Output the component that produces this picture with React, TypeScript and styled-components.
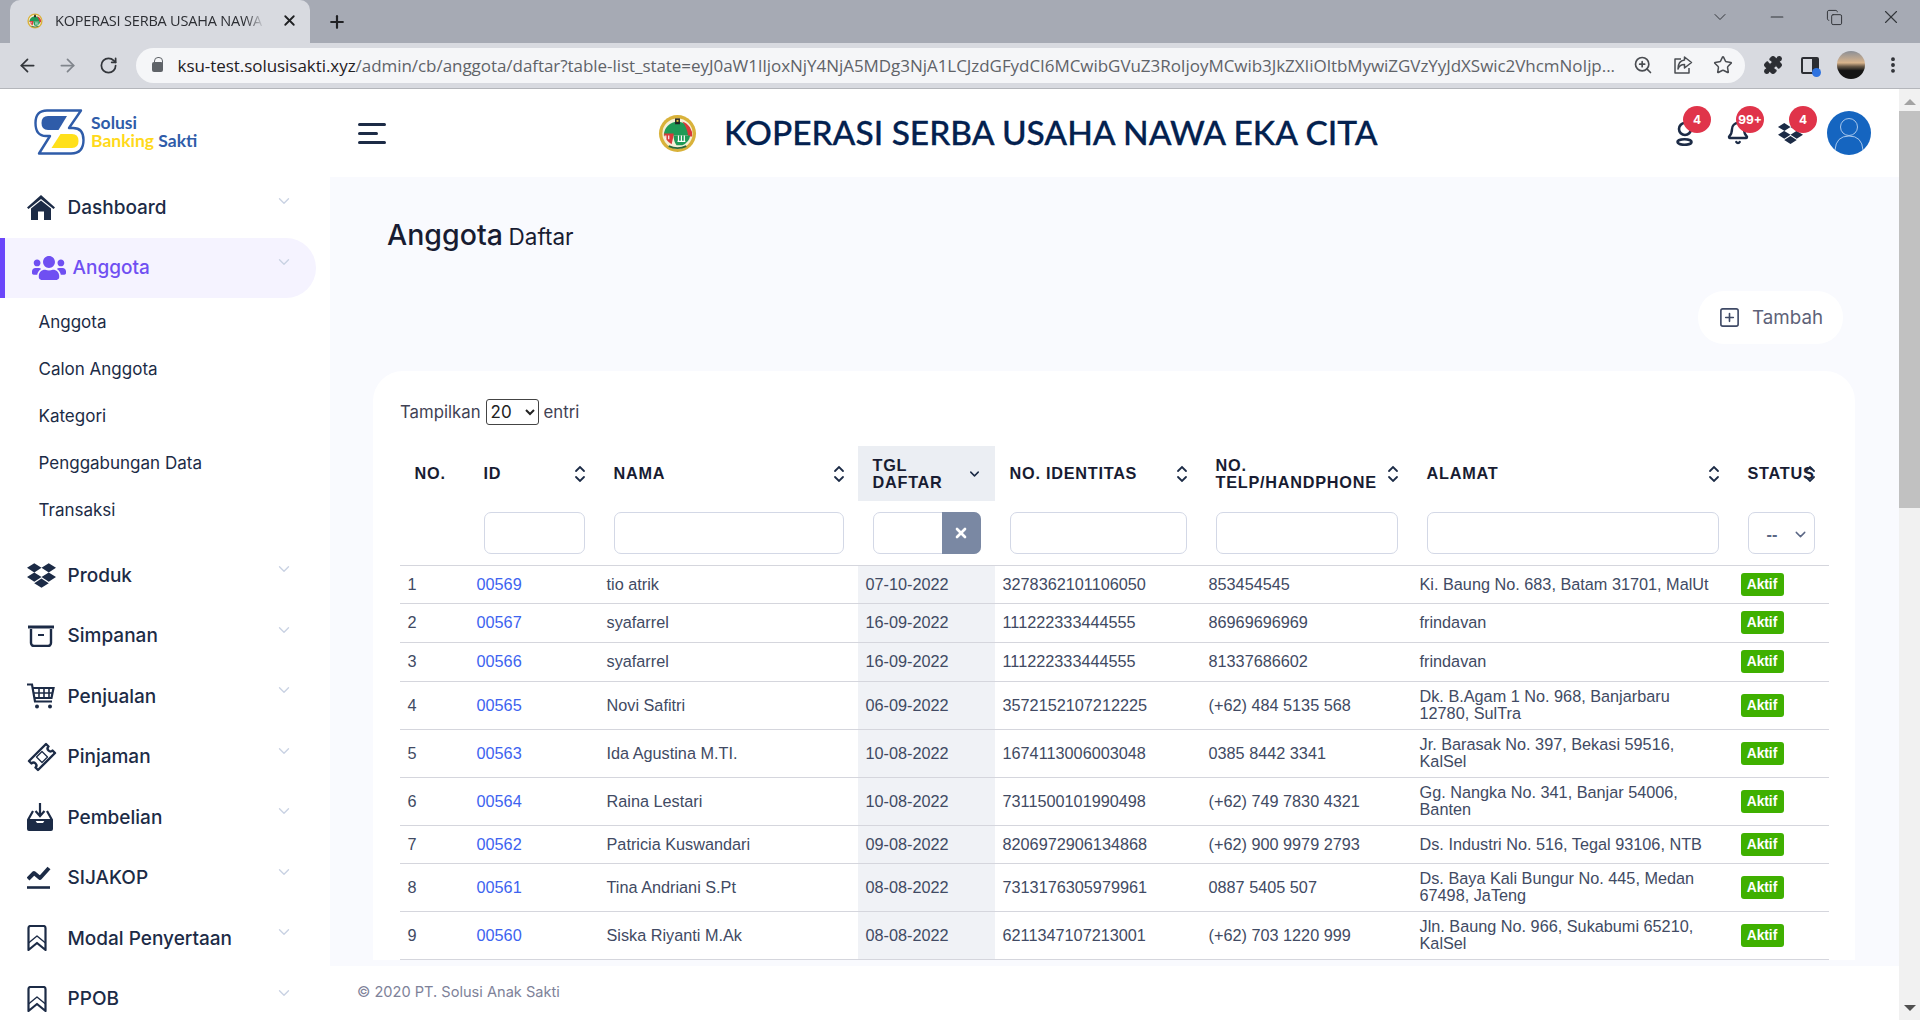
import styled, { createGlobalStyle } from "styled-components";
import { FaDropbox, FaUsers } from "react-icons/fa";
import {
  ArrowLeft,
  ArrowRight,
  Bell,
  ChevronDown,
  Copy,
  Minus,
  MoreVertical,
  Plus,
  Puzzle,
  RotateCw,
  SquarePlus,
  Star,
  X,
  ZoomIn,
} from "lucide-react";

const INK = "#1c2b46";
const URL_REST =
  "/admin/cb/anggota/daftar?table-list_state=eyJ0aW1lIjoxNjY4NjA5MDg3NjA1LCJzdGFydCI6MCwibGVuZ3RoIjoyMCwib3JkZXIiOltbMywiZGVzYyJdXSwic2VhcmNoIjp...";

function HomeIcon() {
  return (
    <svg width="28" height="25" viewBox="0 0 28 25" fill={INK}>
      <path d="M14 0L28 12.500 26.500 14 14 4 1.500 14 0 12.500z" />
      <path d="M14 5.500L24 13.500V25H17V16.500H11V25H4V13.500z" />
    </svg>
  );
}

function ShareIcon() {
  return (
    <svg width="20" height="20" viewBox="0 0 20 20" fill="none" stroke="#4a4d52" strokeWidth="1.500" strokeLinejoin="round">
      <path d="M8 4H2v14h14v-5" />
      <path d="M11.500 2l7 5.500-7 5.500V9.500C8 9.500 6 11 5 14c0-5 2-8.500 6.500-9z" />
    </svg>
  );
}

function ArchiveIcon() {
  return (
    <svg width="28" height="22" viewBox="0 0 28 22" fill="none" stroke={INK} strokeWidth="2.400">
      <path d="M1 2h26" strokeWidth="3" />
      <path d="M4 4v14a3 3 0 0 0 3 3h14a3 3 0 0 0 3-3V4" />
      <path d="M11 10h6" strokeWidth="2" />
    </svg>
  );
}

function CartIcon() {
  return (
    <svg width="28" height="26" viewBox="0 0 28 26" fill="none" stroke={INK} strokeWidth="2">
      <path d="M0 1.500h5l3 17h17" strokeWidth="2.200" />
      <path d="M6 5h20.500l-2 10H8" strokeWidth="2.200" />
      <path d="M12 5v10M17 5v10M22 5v10M7 10h19" strokeWidth="1.600" />
      <circle cx="10" cy="23.500" r="2" fill={INK} stroke="none" />
      <circle cx="23" cy="23.500" r="2" fill={INK} stroke="none" />
    </svg>
  );
}

function TicketIcon() {
  return (
    <svg width="30" height="30" viewBox="0 0 30 30" fill="none" stroke={INK} strokeWidth="2.400" strokeLinejoin="round">
      <path d="M19 2l2.500 2.500a2.500 2.500 0 0 0 4 4L28 11 11 28l-2.500-2.500a2.500 2.500 0 0 0-4-4L2 19z" />
      <path d="M15 9.500l5.500 5.500-5.500 5.500-5.500-5.500z" strokeWidth="1.300" />
    </svg>
  );
}

function InboxIcon() {
  return (
    <svg width="26" height="28" viewBox="0 0 26 28" fill="none">
      <path d="M13 0v12M8.500 8l4.500 5 4.500-5" stroke={INK} strokeWidth="2.200" />
      <path d="M6 8L1 17h24L20 8" stroke={INK} strokeWidth="2.200" />
      <path d="M0 17h8l2 3h6l2-3h8v9a2 2 0 0 1-2 2H2a2 2 0 0 1-2-2z" fill={INK} />
    </svg>
  );
}

function TrendIcon() {
  return (
    <svg width="24" height="23" viewBox="0 0 24 23" fill="none" stroke={INK}>
      <path d="M1 13l6-6 6 5 9-10" strokeWidth="4" strokeLinejoin="round" />
      <path d="M0 21.500h23" strokeWidth="2.600" />
    </svg>
  );
}

function BookmarkIcon() {
  return (
    <svg width="20" height="26" viewBox="0 0 20 26" fill="none" stroke={INK} strokeWidth="2.200" strokeLinejoin="round">
      <path d="M1.500 3a2 2 0 0 1 2-2h13a2 2 0 0 1 2 2v22l-8.500-7-8.500 7z" />
      <path d="M1.500 18L10 11l8.500 7" strokeWidth="1.400" />
    </svg>
  );
}

function BrandLogo() {
  return (
    <svg width="51" height="46" viewBox="0 0 51 46" fill="none">
      <path
        d="M13 1.500H47L35 19h4Q49.500 19 49.500 31 49.500 44.500 37 44.500H5L16 27h-4Q1.500 27 1.500 14 1.500 1.500 13 1.500Z"
        stroke="#2f5ca9"
        strokeWidth="2.400"
        strokeLinejoin="round"
      />
      <path d="M14 7H33L24.500 21H14Q7.500 21 7.500 14 7.500 7 14 7Z" fill="#2f5ca9" />
      <path d="M26.500 25H38Q44.500 25 44.500 32 44.500 39 38 39H17.500Z" fill="#ffe01b" />
    </svg>
  );
}

function SealLogo({ size }: { size: number }) {
  return (
    <svg width={size} height={size} viewBox="0 0 40 40">
      <circle cx="20" cy="20" r="19" fill="#d9b23a" />
      <circle cx="20" cy="20" r="15.500" fill="#f6f0d8" />
      <path d="M6 22a14 14 0 0 1 28 0z" fill="#1f9a56" />
      <path d="M25 8a14 14 0 0 1 10 15h-4q-1-9-6-15z" fill="#d93a3a" />
      <rect x="17.500" y="4.500" width="5" height="6" fill="#222" />
      <rect x="19" y="6" width="2" height="2" fill="#e9c83c" />
      <path d="M6 20h10v2l-2 9q-6-3-8-11z" fill="#d93a3a" />
      <path d="M16 22h17q-1 7-8 10h-6q-3-4-3-10z" fill="#1f9a56" />
      <path d="M21 22v6M24 22v6M27 22v6M20 28h8" stroke="#fff" strokeWidth="1.200" fill="none" />
      <path d="M8 22v4M11 22v4" stroke="#fff" strokeWidth="1.200" fill="none" />
      <path d="M11 33q9 4 18 0" stroke="#2b6a3b" strokeWidth="2" fill="none" />
    </svg>
  );
}

function PersonIcon() {
  return (
    <svg width="18" height="26" viewBox="0 0 18 26" fill="none" stroke={INK} strokeWidth="2.600">
      <circle cx="9" cy="9" r="6" />
      <ellipse cx="8.500" cy="22" rx="7" ry="2.800" />
    </svg>
  );
}

function SortIcon() {
  return (
    <svg width="12" height="17" viewBox="0 0 12 17" fill="none" stroke={INK} strokeWidth="1.800" strokeLinecap="round">
      <path d="M2 5.500L6 1.500l4 4M2 11.500l4 4 4-4" />
    </svg>
  );
}

type RowData = {
  no: number;
  id: string;
  nama: string;
  tgl: string;
  identitas: string;
  telp: string;
  alamat: string;
  height: number;
};

const ROWS: RowData[] = [
  { no: 1, id: "00569", nama: "tio atrik", tgl: "07-10-2022", identitas: "3278362101106050", telp: "853454545", alamat: "Ki. Baung No. 683, Batam 31701, MalUt", height: 38 },
  { no: 2, id: "00567", nama: "syafarrel", tgl: "16-09-2022", identitas: "111222333444555", telp: "86969696969", alamat: "frindavan", height: 39 },
  { no: 3, id: "00566", nama: "syafarrel", tgl: "16-09-2022", identitas: "111222333444555", telp: "81337686602", alamat: "frindavan", height: 39 },
  { no: 4, id: "00565", nama: "Novi Safitri", tgl: "06-09-2022", identitas: "3572152107212225", telp: "(+62) 484 5135 568", alamat: "Dk. B.Agam 1 No. 968, Banjarbaru 12780, SulTra", height: 48 },
  { no: 5, id: "00563", nama: "Ida Agustina M.TI.", tgl: "10-08-2022", identitas: "1674113006003048", telp: "0385 8442 3341", alamat: "Jr. Barasak No. 397, Bekasi 59516, KalSel", height: 48 },
  { no: 6, id: "00564", nama: "Raina Lestari", tgl: "10-08-2022", identitas: "7311500101990498", telp: "(+62) 749 7830 4321", alamat: "Gg. Nangka No. 341, Banjar 54006, Banten", height: 48 },
  { no: 7, id: "00562", nama: "Patricia Kuswandari", tgl: "09-08-2022", identitas: "8206972906134868", telp: "(+62) 900 9979 2793", alamat: "Ds. Industri No. 516, Tegal 93106, NTB", height: 38 },
  { no: 8, id: "00561", nama: "Tina Andriani S.Pt", tgl: "08-08-2022", identitas: "7313176305979961", telp: "0887 5405 507", alamat: "Ds. Baya Kali Bungur No. 445, Medan 67498, JaTeng", height: 48 },
  { no: 9, id: "00560", nama: "Siska Riyanti M.Ak", tgl: "08-08-2022", identitas: "6211347107213001", telp: "(+62) 703 1220 999", alamat: "Jln. Baung No. 966, Sukabumi 65210, KalSel", height: 48 },
];

const COLUMNS = [69, 130, 259, 137, 206, 211, 321, 96];

const SUBMENU = ["Anggota", "Calon Anggota", "Kategori", "Penggabungan Data", "Transaksi"];

const LOWER_MENU = [
  { label: "Produk", icon: <FaDropbox size={29} color={INK} /> },
  { label: "Simpanan", icon: <ArchiveIcon /> },
  { label: "Penjualan", icon: <CartIcon /> },
  { label: "Pinjaman", icon: <TicketIcon /> },
  { label: "Pembelian", icon: <InboxIcon /> },
  { label: "SIJAKOP", icon: <TrendIcon /> },
  { label: "Modal Penyertaan", icon: <BookmarkIcon /> },
  { label: "PPOB", icon: <BookmarkIcon /> },
];

function App() {
  return (
    <Screen>
      <GlobalStyle />
      <TabStrip>
        <Tab>
          <SealLogo size={16} />
          <TabTitle>KOPERASI SERBA USAHA NAWA EKA CITA</TabTitle>
          <X size={17} strokeWidth={2.6} color="#202124" />
        </Tab>
        <NewTab>
          <Plus size={20} strokeWidth={2.6} color="#202124" />
        </NewTab>
        <WindowControls>
          <ChevronDown size={20} strokeWidth={1.2} />
          <Minus size={20} strokeWidth={1.3} />
          <Copy size={17} strokeWidth={1.4} />
          <X size={22} strokeWidth={1.2} />
        </WindowControls>
      </TabStrip>

      <Toolbar>
        <NavButton>
          <ArrowLeft size={21} strokeWidth={2} color="#33363b" />
        </NavButton>
        <NavButton>
          <ArrowRight size={21} strokeWidth={2} color="#80858c" />
        </NavButton>
        <NavButton>
          <RotateCw size={19} strokeWidth={2.2} color="#33363b" />
        </NavButton>
        <AddressBar>
          <LockShape />
          <UrlText>
            <UrlHost>ksu-test.solusisakti.xyz</UrlHost>
            {URL_REST}
          </UrlText>
          <AddressIcons>
            <ZoomIn size={20} strokeWidth={2} />
            <ShareIcon />
            <Star size={20} strokeWidth={1.8} />
          </AddressIcons>
        </AddressBar>
        <ToolbarEnd>
          <Puzzle size={20} fill="#2c2e33" strokeWidth={1.5} />
          <PanelShape />
          <ProfileDot />
          <MoreVertical size={20} strokeWidth={2.6} />
        </ToolbarEnd>
      </Toolbar>

      <PageBody>
        <Sidebar>
          <LogoRow>
            <BrandLogo />
            <LogoText>
              <span>Solusi</span>
              <span>
                <LogoYellow>Banking</LogoYellow> Sakti
              </span>
            </LogoText>
          </LogoRow>

          <MenuItem>
            <MenuIcon>
              <HomeIcon />
            </MenuIcon>
            <MenuLabel>Dashboard</MenuLabel>
            <MenuChevron size={18} strokeWidth={1.8} />
          </MenuItem>
          <MenuItem $active>
            <MenuIcon>
              <FaUsers size={34} color="#6f4ff2" />
            </MenuIcon>
            <MenuLabel $active>Anggota</MenuLabel>
            <MenuChevron size={18} strokeWidth={1.8} $active />
          </MenuItem>
          <SubMenu>
            {SUBMENU.map((item) => (
              <SubItem key={item}>{item}</SubItem>
            ))}
          </SubMenu>
          {LOWER_MENU.map((item) => (
            <MenuItem key={item.label}>
              <MenuIcon>{item.icon}</MenuIcon>
              <MenuLabel>{item.label}</MenuLabel>
              <MenuChevron size={18} strokeWidth={1.8} />
            </MenuItem>
          ))}
        </Sidebar>

        <Workspace>
          <Topbar>
            <Hamburger>
              <span />
              <span />
              <span />
            </Hamburger>
            <OrgName>
              <SealLogo size={39} />
              <h1>KOPERASI SERBA USAHA NAWA EKA CITA</h1>
            </OrgName>
            <TopIcons>
              <TopIcon>
                <PersonIcon />
                <Badge>4</Badge>
              </TopIcon>
              <TopIcon>
                <Bell size={24} strokeWidth={2.4} color={INK} />
                <Badge>99+</Badge>
              </TopIcon>
              <TopIcon>
                <FaDropbox size={25} color={INK} />
                <Badge>4</Badge>
              </TopIcon>
              <Avatar>
                <svg width="44" height="44" viewBox="0 0 44 44" fill="none" stroke="#a9c8ec" strokeWidth="1">
                  <circle cx="22" cy="16" r="8.500" />
                  <path d="M8 39q1-14 14-14t14 14" />
                </svg>
              </Avatar>
            </TopIcons>
          </Topbar>

          <Content>
            <PageTitle>
              Anggota <small>Daftar</small>
            </PageTitle>
            <ActionRow>
              <AddButton>
                <SquarePlus size={23} strokeWidth={1.7} color="#3f4a66" />
                Tambah
              </AddButton>
            </ActionRow>
            <Card>
              <LengthRow>
                Tampilkan
                <LengthSelect defaultValue="20">
                  <option>20</option>
                </LengthSelect>
                entri
              </LengthRow>
              <DataTable>
                <colgroup>
                  {COLUMNS.map((w, i) => (
                    <col key={i} width={w} />
                  ))}
                </colgroup>
                <thead>
                  <tr>
                    <HeadCell>NO.</HeadCell>
                    <HeadCell>
                      ID
                      <SortMark><SortIcon /></SortMark>
                    </HeadCell>
                    <HeadCell>
                      NAMA
                      <SortMark><SortIcon /></SortMark>
                    </HeadCell>
                    <HeadCell $sorted>
                      TGL
                      <br />
                      DAFTAR
                      <SortMark>
                        <ChevronDown size={15} strokeWidth={2.4} color={INK} />
                      </SortMark>
                    </HeadCell>
                    <HeadCell>
                      NO. IDENTITAS
                      <SortMark><SortIcon /></SortMark>
                    </HeadCell>
                    <HeadCell>
                      NO.
                      <br />
                      TELP/HANDPHONE
                      <SortMark><SortIcon /></SortMark>
                    </HeadCell>
                    <HeadCell>
                      ALAMAT
                      <SortMark><SortIcon /></SortMark>
                    </HeadCell>
                    <HeadCell>
                      STATUS
                      <SortMark><SortIcon /></SortMark>
                    </HeadCell>
                  </tr>
                  <tr>
                    <FilterCell />
                    <FilterCell><FilterInput /></FilterCell>
                    <FilterCell><FilterInput /></FilterCell>
                    <FilterCell>
                      <DateFilter>
                        <FilterInput />
                        <ClearButton>
                          <X size={16} strokeWidth={4} color="#fff" />
                        </ClearButton>
                      </DateFilter>
                    </FilterCell>
                    <FilterCell><FilterInput /></FilterCell>
                    <FilterCell><FilterInput /></FilterCell>
                    <FilterCell><FilterInput /></FilterCell>
                    <FilterCell>
                      <StatusFilter>
                        <span>--</span>
                        <ChevronDown size={17} strokeWidth={2} color="#5b6785" />
                      </StatusFilter>
                    </FilterCell>
                  </tr>
                </thead>
                <tbody>
                  {ROWS.map((row) => (
                    <BodyRow key={row.no} $height={row.height}>
                      <BodyCell>{row.no}</BodyCell>
                      <BodyCell><IdLink>{row.id}</IdLink></BodyCell>
                      <BodyCell>{row.nama}</BodyCell>
                      <BodyCell $sorted>{row.tgl}</BodyCell>
                      <BodyCell>{row.identitas}</BodyCell>
                      <BodyCell>{row.telp}</BodyCell>
                      <AddressCell>{row.alamat}</AddressCell>
                      <BodyCell><StatusBadge>Aktif</StatusBadge></BodyCell>
                    </BodyRow>
                  ))}
                </tbody>
              </DataTable>
            </Card>
          </Content>

          <Footer>© 2020 PT. Solusi Anak Sakti</Footer>
        </Workspace>

        <Scrollbar>
          <ScrollArrow />
          <ScrollThumb />
          <ScrollArrow $down />
        </Scrollbar>
      </PageBody>
    </Screen>
  );
}

const GlobalStyle = createGlobalStyle`
  html, body {
    margin: 0;
    padding: 0;
    overflow: hidden;
  }
  * {
    box-sizing: border-box;
  }
`;

const Screen = styled.div`
  display: flex;
  flex-direction: column;
  width: 1920px;
  height: 1020px;
  overflow: hidden;
  font-family: "Inter", sans-serif;
`;

const TabStrip = styled.div`
  display: flex;
  align-items: flex-end;
  flex: none;
  height: 43px;
  padding-left: 10px;
  background: #a6aab4;
`;

const Tab = styled.div`
  display: flex;
  align-items: center;
  width: 300px;
  height: 43px;
  padding: 0 12px 2px 17px;
  border-radius: 10px 10px 0 0;
  background: #d8dae0;
`;

const TabTitle = styled.span`
  flex: 1;
  margin: 0 10px 0 12px;
  overflow: hidden;
  white-space: nowrap;
  font-family: "Open Sans", sans-serif;
  font-size: 14.5px;
  letter-spacing: -0.2px;
  color: #2c2e33;
  mask-image: linear-gradient(to right, #000 88%, transparent 97%);
`;

const NewTab = styled.div`
  display: flex;
  align-items: center;
  margin: 0 0 11px 17px;
`;

const WindowControls = styled.div`
  display: grid;
  grid-template-columns: repeat(4, 57.25px);
  justify-items: center;
  align-items: center;
  margin: 0 0 15px auto;
  color: #33363b;
`;

const Toolbar = styled.div`
  display: flex;
  align-items: center;
  flex: none;
  height: 46px;
  padding: 0 17px 1px 7px;
  border-bottom: 1px solid #b4b6bb;
  background: #d8dae0;
`;

const NavButton = styled.div`
  display: flex;
  align-items: center;
  justify-content: center;
  width: 40.5px;
`;

const AddressBar = styled.div`
  display: flex;
  align-items: center;
  width: 1609px;
  height: 35px;
  margin-left: 7px;
  padding: 0 12px 0 16px;
  border-radius: 18px;
  background: #f5f6f8;
`;

const LockShape = styled.span`
  position: relative;
  flex: none;
  width: 11px;
  height: 10px;
  margin: 4px 15px 0 0;
  border-radius: 2px;
  background: #5f6368;

  &::before {
    content: "";
    position: absolute;
    left: 2px;
    top: -5px;
    width: 7px;
    height: 7px;
    border: 1.5px solid #5f6368;
    border-radius: 4px 4px 0 0;
  }
`;

const UrlText = styled.span`
  flex: none;
  width: 1438px;
  overflow: hidden;
  white-space: nowrap;
  font-family: "Open Sans", sans-serif;
  font-size: 17px;
  letter-spacing: -0.05px;
  color: #5f6368;
`;

const UrlHost = styled.span`
  color: #1f2023;
`;

const AddressIcons = styled.div`
  display: flex;
  align-items: center;
  justify-content: space-between;
  flex: none;
  width: 100px;
  margin-left: 17px;
  color: #4a4d52;
`;

const ToolbarEnd = styled.div`
  display: flex;
  align-items: center;
  justify-content: space-between;
  flex: 1;
  padding-left: 18px;
  color: #2c2e33;
`;

const PanelShape = styled.span`
  position: relative;
  width: 18px;
  height: 17px;
  border: 2.5px solid #2c2e33;
  border-right-width: 7px;
  border-radius: 2px;

  &::after {
    content: "";
    position: absolute;
    right: -9px;
    bottom: -5px;
    width: 9px;
    height: 9px;
    border-radius: 50%;
    background: #2f73e0;
  }
`;

const ProfileDot = styled.span`
  width: 28px;
  height: 28px;
  border-radius: 50%;
  background: linear-gradient(#8b8f96 0%, #d9b48c 42%, #6a5a48 55%, #141414 70%);
`;

const PageBody = styled.div`
  display: flex;
  flex: 1;
  min-height: 0;
`;

const Sidebar = styled.aside`
  flex: none;
  width: 330px;
  overflow: hidden;
  background: #fff;
`;

const LogoRow = styled.div`
  display: flex;
  align-items: center;
  gap: 6px;
  height: 88px;
  padding: 0 0 3px 34px;
`;

const LogoText = styled.div`
  display: flex;
  flex-direction: column;
  font-family: "Lato", sans-serif;
  font-size: 17.5px;
  font-weight: 700;
  line-height: 18px;
  color: #2f5ca9;
`;

const LogoYellow = styled.span`
  color: #ffd91a;
`;

const MenuItem = styled.div<{ $active?: boolean }>`
  display: flex;
  align-items: center;
  height: 60.5px;
  width: ${(p) => (p.$active ? "316px" : "100%")};
  padding-left: 27px;
  border-left: ${(p) => (p.$active ? "5px solid #6b46fa" : "none")};
  border-radius: ${(p) => (p.$active ? "0 30px 30px 0" : "0")};
  background: ${(p) => (p.$active ? "#f5f3ff" : "transparent")};
`;

const MenuIcon = styled.span`
  display: flex;
  align-items: center;
  flex: none;
  width: 40.5px;
`;

const MenuLabel = styled.span<{ $active?: boolean }>`
  flex: 1;
  font-size: 19px;
  font-weight: 500;
  color: ${(p) => (p.$active ? "#6f4ff2" : INK)};
`;

const MenuChevron = styled(ChevronDown)<{ $active?: boolean }>`
  flex: none;
  margin: 0 ${(p) => (p.$active ? "23px" : "37px")} 12px 0;
  color: #c9d2e3;
`;

const SubMenu = styled.div`
  padding-bottom: 12px;
`;

const SubItem = styled.div`
  display: flex;
  align-items: center;
  height: 47px;
  padding-left: 38.5px;
  font-size: 17px;
  color: ${INK};
`;

const Workspace = styled.div`
  display: flex;
  flex-direction: column;
  flex: 1;
  min-width: 0;
`;

const Topbar = styled.header`
  display: flex;
  align-items: center;
  flex: none;
  height: 88px;
  padding: 0 28px;
  background: #fff;
`;

const Hamburger = styled.div`
  display: flex;
  flex-direction: column;
  gap: 6px;
  flex: none;
  width: 28px;

  span {
    height: 3px;
    border-radius: 2px;
    background: ${INK};
  }

  span:nth-child(2) {
    width: 20px;
  }
`;

const OrgName = styled.div`
  display: flex;
  align-items: center;
  gap: 27px;
  margin-left: 272px;

  h1 {
    margin: 0 0 2px;
    font-family: "Lato", sans-serif;
    font-size: 33.5px;
    font-weight: 500;
    color: #03214f;
    white-space: nowrap;
    -webkit-text-stroke: 0.3px #03214f;
  }
`;

const TopIcons = styled.div`
  display: flex;
  align-items: center;
  margin-left: auto;
`;

const TopIcon = styled.div`
  position: relative;
  display: flex;
  align-items: center;
  justify-content: center;
  width: 53px;
  height: 44px;

  &:nth-child(3) {
    margin-right: 10px;
  }
`;

const Badge = styled.span`
  position: absolute;
  top: -5px;
  left: 25px;
  display: flex;
  align-items: center;
  justify-content: center;
  width: 28px;
  height: 27px;
  border-radius: 50%;
  background: #e0344a;
  font-size: 12px;
  font-weight: 700;
  color: #fff;
`;

const Avatar = styled.div`
  width: 44px;
  height: 44px;
  overflow: hidden;
  border-radius: 50%;
  background: #1565c0;
`;

const Content = styled.main`
  flex: 1;
  min-height: 0;
  overflow: hidden;
  padding: 40px 44px 0 43px;
  background: #f9fafe;
`;

const PageTitle = styled.div`
  margin-left: 14px;
  font-size: 28.5px;
  font-weight: 500;
  line-height: 36px;
  word-spacing: -2px;
  color: #181c32;

  small {
    font-size: 22.5px;
    font-weight: 400;
  }
`;

const ActionRow = styled.div`
  display: flex;
  justify-content: flex-end;
  margin: 36px 12px 27px 0;
`;

const AddButton = styled.div`
  display: flex;
  align-items: center;
  gap: 11px;
  height: 53px;
  padding: 0 20px;
  border-radius: 26px;
  background: #fff;
  font-size: 18.75px;
  color: #5e6278;
`;

const Card = styled.section`
  padding: 28px 26px 0 27px;
  border-radius: 30px 30px 0 0;
  background: #fff;
`;

const LengthRow = styled.div`
  display: flex;
  align-items: center;
  gap: 5px;
  height: 26px;
  margin-bottom: 21px;
  font-size: 16.75px;
  color: #3f4254;
`;

const LengthSelect = styled.select`
  width: 53px;
  height: 26px;
  border: 1px solid #444;
  border-radius: 3px;
  background: #fff;
  font-family: "Inter", sans-serif;
  font-size: 17px;
  color: #222;
`;

const DataTable = styled.table`
  width: 1429px;
  table-layout: fixed;
  border-collapse: collapse;
  font-family: "Liberation Sans", Arial, sans-serif;
  font-size: 16.25px;
  line-height: 17px;
`;

const HeadCell = styled.th<{ $sorted?: boolean }>`
  position: relative;
  height: 55px;
  padding: 0 14.5px;
  background: ${(p) => (p.$sorted ? "#ebeef3" : "transparent")};
  font-weight: 700;
  letter-spacing: 0.75px;
  text-align: left;
  white-space: nowrap;
  color: #181c32;
`;

const SortMark = styled.span`
  position: absolute;
  top: 50%;
  right: 13px;
  display: flex;
  transform: translateY(-50%);
`;

const FilterCell = styled.th`
  height: 64px;
  padding: 11px 14.5px 0;
  vertical-align: top;
  font-weight: 400;
`;

const FilterInput = styled.div`
  width: 100%;
  height: 42px;
  border: 1px solid #d3d8e6;
  border-radius: 7px;
  background: #fff;
`;

const DateFilter = styled.div`
  position: relative;
`;

const ClearButton = styled.span`
  position: absolute;
  top: 0;
  right: 0;
  display: flex;
  align-items: center;
  justify-content: center;
  width: 39px;
  height: 42px;
  border-radius: 0 7px 7px 0;
  background: #7a88a3;
`;

const StatusFilter = styled.div`
  display: flex;
  align-items: center;
  justify-content: space-between;
  height: 42px;
  padding: 2px 5px 0 18px;
  border: 1px solid #d3d8e6;
  border-radius: 7px;
  font-weight: 700;
  color: #5b6785;
`;

const BodyRow = styled.tr<{ $height: number }>`
  height: ${(p) => p.$height}px;
  border-top: 1px solid #d5d6dd;
  border-bottom: 1px solid #d5d6dd;
`;

const BodyCell = styled.td<{ $sorted?: boolean }>`
  padding: 0 7.5px;
  background: ${(p) => (p.$sorted ? "#f0f2f6" : "transparent")};
  color: #414a63;
`;

const AddressCell = styled(BodyCell)`
  padding-right: 18px;
`;

const IdLink = styled.a`
  color: #3d63f0;
`;

const StatusBadge = styled.span`
  display: inline-flex;
  align-items: center;
  justify-content: center;
  width: 43px;
  height: 23px;
  border-radius: 3px;
  background: #3fb000;
  font-size: 13.75px;
  font-weight: 700;
  color: #fff;
`;

const Footer = styled.footer`
  display: flex;
  align-items: center;
  flex: none;
  height: 54px;
  padding: 0 0 2px 27px;
  background: #fff;
  font-size: 14.6px;
  color: #7e8299;
`;

const Scrollbar = styled.div`
  display: flex;
  flex-direction: column;
  flex: none;
  width: 21px;
  background: #f1f1f1;
`;

const ScrollArrow = styled.span<{ $down?: boolean }>`
  flex: none;
  align-self: center;
  width: 0;
  height: 0;
  margin: ${(p) => (p.$down ? "auto 0 9px" : "10px 0 6px")};
  border-left: 6px solid transparent;
  border-right: 6px solid transparent;
  border-top: ${(p) => (p.$down ? "6px solid #505050" : "none")};
  border-bottom: ${(p) => (p.$down ? "none" : "6px solid #a3a3a3")};
`;

const ScrollThumb = styled.span`
  flex: none;
  height: 397px;
  background: #c1c1c1;
`;

export default App;
